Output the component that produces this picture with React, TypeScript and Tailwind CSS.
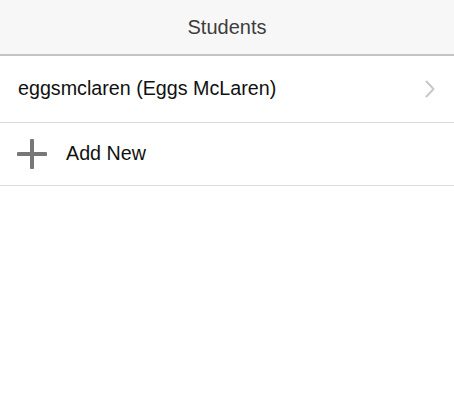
import React from 'react';

export default function App() {
  return (
    <div className="min-h-[400px] w-full bg-white" style={{ fontFamily: '"Liberation Sans", Arial, sans-serif' }}>
      <header className="h-[56px] bg-[#f7f7f7] border-b-2 border-[#c4c4c4] flex items-center justify-center">
        <span className="text-[20px] text-[#3d3d3d] leading-none">Students</span>
      </header>

      <button className="w-full h-[67px] flex items-center justify-between pl-[18px] pr-[18px] border-b border-[#dcdcdc] text-left">
        <span className="text-[19.7px] text-[#111] leading-none">eggsmclaren (Eggs McLaren)</span>
        <svg width="10" height="18" viewBox="0 0 10 18" fill="none" className="mr-[1px]">
          <path d="M1.5 1.5 L8.5 9 L1.5 16.5" stroke="#c8c8cc" strokeWidth="2" strokeLinecap="round" strokeLinejoin="round" />
        </svg>
      </button>

      <button className="w-full h-[63px] flex items-center pl-[17px] border-b border-[#dcdcdc] text-left">
        <svg width="30" height="30" viewBox="0 0 30 30" className="shrink-0">
          <path d="M15 1.5 V28.5 M1.5 15 H28.5" stroke="#777" strokeWidth="4" strokeLinecap="round" />
        </svg>
        <span className="ml-[19px] text-[19.7px] text-[#111] leading-none">Add New</span>
      </button>
    </div>
  );
}
